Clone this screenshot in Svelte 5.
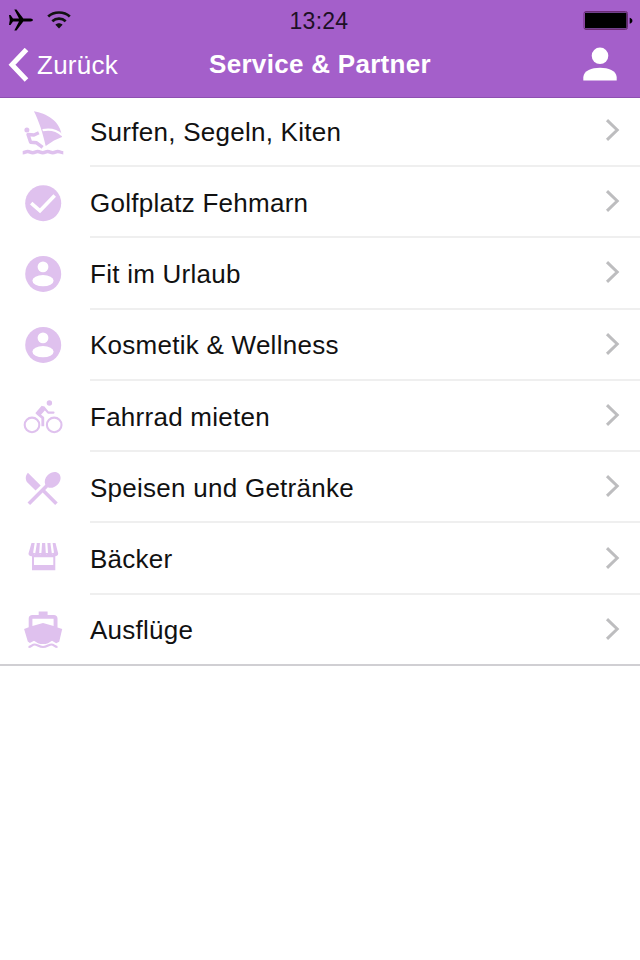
<script lang="ts">
	type Entry = { label: string; icon: string };

	const entries: Entry[] = [
		{ label: 'Surfen, Segeln, Kiten', icon: 'surf' },
		{ label: 'Golfplatz Fehmarn', icon: 'check' },
		{ label: 'Fit im Urlaub', icon: 'person' },
		{ label: 'Kosmetik & Wellness', icon: 'person' },
		{ label: 'Fahrrad mieten', icon: 'bike' },
		{ label: 'Speisen und Getränke', icon: 'food' },
		{ label: 'Bäcker', icon: 'shop' },
		{ label: 'Ausflüge', icon: 'boat' }
	];
</script>

<svelte:head>
	<title>Service &amp; Partner</title>
</svelte:head>

<div class="screen">
	<header>
		<div class="status">
			<div class="signals">
				<svg width="24" height="24" viewBox="0 0 24 24">
					<path
						d="M0 7h1.500l2.500 3.600h6L5.300 1.500h2.200l6.800 9.100h7.200c3.200 0 3.200 3 0 3h-7.200L7.500 22.500H5.300l4.700-8.900H4L1.500 17H0l.8-4.900z"
					/>
				</svg>
				<svg class="wifi" width="24" height="20" viewBox="0 0 24 20">
					<path d="M1.200 6.600C7 1.100 17 1.100 22.800 6.600" />
					<path d="M5.300 11.200c3.800-3.400 9.600-3.400 13.400 0" />
					<path class="dot" d="M8.400 14.800c2-2 5.200-2 7.200 0L12 18.600z" />
				</svg>
			</div>
			<span class="time">13:24</span>
			<svg class="battery" width="50" height="20" viewBox="0 0 50 20">
				<rect class="case" x="1" y="1.500" width="43.500" height="18" rx="2" />
				<rect x="2" y="2.700" width="41.500" height="15.600" />
				<path d="M46.700 7.700c3.600.8 3.600 5.200 0 6z" />
			</svg>
		</div>

		<nav>
			<button class="back">
				<svg width="22" height="34" viewBox="0 0 22 34">
					<path d="M19.500 1.500 5 16.800l14.500 15.200" />
				</svg>
				<span>Zurück</span>
			</button>
			<h1>Service &amp; Partner</h1>
			<button class="profile" aria-label="Profil">
				<svg width="34" height="34" viewBox="0 0 34 34">
					<circle cx="17" cy="8.800" r="8.300" />
					<path d="M.3 33.500V30C1 23.500 8.500 20.700 17 20.700S33 23.500 33.700 30v3.500z" />
				</svg>
			</button>
		</nav>
	</header>

	<ul>
		{#each entries as entry}
			<li>
				<svg class="icon" width="44" height="44" viewBox="0 0 44 44">
					{#if entry.icon === 'surf'}
						<path d="M12.900.2C25 2.500 39.500 9 41 26l-8 3.500-8.300 5.500C22 23 18 10 12.900.2z" />
						<path class="gap" d="M21.600 19.200c7-1.500 14-.2 19.600 5" />
						<circle cx="5.900" cy="18.900" r="2.500" />
						<path class="line" d="M17.800 21.800 13 24 7 23.500l2.600 7.700 6 .6 6 4.600" />
						<path
							class="wave"
							d="M1.700 41.700c2.500 0 2.500-1.200 5-1.200s2.500 1.200 5 1.200 2.500-1.200 5-1.200 2.500 1.200 5 1.200 2.500-1.200 5-1.200 2.500 1.200 5 1.200 2.500-1.200 5-1.200 2.500 1.200 5.600 1.200"
						/>
					{:else if entry.icon === 'check'}
						<circle cx="22.200" cy="22.200" r="18" />
						<path class="tick" d="m10.200 22.200 8.800 7.600L33.700 14.600" />
					{:else if entry.icon === 'person'}
						<circle cx="22.200" cy="21.900" r="18" />
						<circle class="hole" cx="22" cy="14.900" r="5.400" />
						<ellipse class="hole" cx="22" cy="28.700" rx="10.600" ry="5.600" />
					{:else if entry.icon === 'bike'}
						<circle class="wheel" cx="11" cy="29.900" r="7.300" />
						<circle class="wheel" cx="33.200" cy="29.900" r="7.300" />
						<circle cx="28.400" cy="8" r="2.700" />
						<path class="rider" d="M22.300 12.300 16.500 18.500l5.300 4.300v8.500" />
						<path class="arm" d="m22.800 12.500 4.400 5.100h5.300" />
						<path d="m14.200 18.300 6.500-7.500 3 1.200 1 2.600-5.200 5.700z" />
					{:else if entry.icon === 'food'}
						<path
							transform="translate(-.2 .3) scale(1.820)"
							d="M8.100 13.340l2.830-2.830L3.910 3.500c-1.560 1.560-1.560 4.090 0 5.660l4.190 4.180zm6.780-1.810c1.530.71 3.680.21 5.270-1.380 1.910-1.910 2.280-4.650.81-6.120-1.460-1.460-4.200-1.100-6.120.81-1.590 1.590-2.090 3.740-1.380 5.270L3.700 19.870l1.410 1.410L12 14.410l6.880 6.880 1.410-1.410L13.410 13l1.470-1.470z"
						/>
					{:else if entry.icon === 'shop'}
						<path
							d="M10.500 6h24l2.700 10.500c0 3.500-5 3.500-5.800 1-1 2.500-5 2.500-6 0-1 2.500-5 2.500-6 0-1 2.500-5 2.500-6 0-1 2.500-5.900 2.500-5.900-1z"
						/>
						<path class="stripe" d="m14.800 6-1.600 10M20 6l-.7 10M25.300 6l.6 10M30.500 6l1.400 10" />
						<path fill-rule="evenodd" d="M11 18h23.300v15.200H11zM13 20.300h19.300v7.700H13z" />
					{:else}
						<path
							fill-rule="evenodd"
							d="M17.700 4.400h8.900v3.700h6.200c2.300 0 3.700 1.300 3.700 3.500v8.800l4.700 1.500-3 12.800-3 1.500-4.200-2.500-4 2.500c-3 1.200-7 1.200-10 0l-4-2.500-4.200 2.300-2-1.500-3.700-12.600 4.600-1.600v-8.700c0-2.200 1.400-3.500 3.700-3.500h6.300zM11.400 11.700v7.400L22 15.900l10.600 3.200v-7.400z"
						/>
						<path
							class="water"
							d="M7.500 40c3 0 3.500-2.500 6-2.500 2.700 0 4.500 2.500 8.500 2.500s5.800-2.500 8.500-2.500c2.500 0 3 2.500 6 2.500"
						/>
					{/if}
				</svg>
				<div class="row">
					<span class="label">{entry.label}</span>
					<svg class="chevron" width="16" height="24" viewBox="0 0 16 24">
						<path d="m3 2.200 10.200 9.800L3 21.800" />
					</svg>
				</div>
			</li>
		{/each}
	</ul>
</div>

<style>
	:global(body) {
		background: #fff;
	}

	.screen {
		width: 640px;
		height: 960px;
		overflow: hidden;
		background: #fff;
		font-family: 'Liberation Sans', Arial, sans-serif;
		letter-spacing: 0.26px;
		color: #111;
	}

	header {
		box-sizing: border-box;
		height: 98px;
		background: #a45fca;
		border-bottom: 1px solid #8e50b1;
	}

	svg {
		display: block;
		flex: none;
	}

	.status {
		display: grid;
		grid-template-columns: 1fr auto 1fr;
		align-items: center;
		height: 40px;
		padding: 0 7px 0 9px;
	}

	.signals {
		display: flex;
		align-items: center;
		gap: 14px;
	}

	.wifi path {
		fill: none;
		stroke: #111;
		stroke-width: 2.7;
	}

	.wifi .dot {
		fill: #111;
		stroke: none;
	}

	.time {
		margin-right: 4px;
		padding-top: 2px;
		font-size: 23px;
		color: #1d1026;
	}

	.battery {
		justify-self: end;
	}

	.case {
		fill: none;
		stroke: #6d2b75;
	}

	nav {
		display: grid;
		grid-template-columns: 1fr auto 1fr;
		align-items: center;
		height: 50px;
		padding: 0 23px 0 7px;
	}

	button {
		padding: 0;
		border: 0;
		background: none;
		font: inherit;
		letter-spacing: inherit;
		color: #fff;
	}

	.back {
		display: flex;
		align-items: center;
		gap: 8px;
		font-size: 26px;
	}

	.back path {
		fill: none;
		stroke: #fff;
		stroke-width: 5;
	}

	h1 {
		margin: 0 0 2px 16px;
		font-size: 26px;
		line-height: 30px;
		letter-spacing: 0.3px;
		color: #fff;
	}

	.profile {
		justify-self: end;
		margin-bottom: 3px;
	}

	.profile svg {
		fill: #fff;
	}

	ul {
		margin: 0;
		padding: 0;
		list-style: none;
		border-bottom: 2px solid #d0cfd3;
	}

	li {
		display: flex;
		align-items: center;
		height: 71.3px;
		padding-left: 21px;
	}

	li:first-child {
		height: 69px;
	}

	li:last-child {
		height: 69.2px;
	}

	.icon {
		margin-right: 25px;
		fill: #dfc1ee;
	}

	.row {
		display: flex;
		flex: 1;
		align-items: center;
		justify-content: space-between;
		box-sizing: border-box;
		height: 100%;
		padding: 2px 20px 0 0;
		border-bottom: 2px solid #efefef;
	}

	li:first-child .row {
		padding-top: 0;
	}

	li:last-child .row {
		border-bottom: 0;
	}

	.label {
		font-size: 26px;
		line-height: 30px;
	}

	.chevron {
		margin-bottom: 3px;
	}

	.chevron path {
		fill: none;
		stroke: #bdbdbf;
		stroke-width: 3;
	}

	.gap,
	.tick,
	.stripe {
		fill: none;
		stroke: #fff;
		stroke-width: 2.2;
	}

	.tick {
		stroke-width: 3.6;
	}

	.hole {
		fill: #fff;
	}

	.line,
	.wave,
	.wheel,
	.rider,
	.arm,
	.water {
		fill: none;
		stroke: #dfc1ee;
		stroke-width: 3.4;
		stroke-linejoin: round;
	}

	.wheel {
		stroke-width: 2.1;
	}

	.rider {
		stroke-width: 2.8;
	}

	.arm {
		stroke-width: 2.2;
		stroke-linecap: round;
	}

	.water {
		stroke-width: 2.2;
	}
</style>
